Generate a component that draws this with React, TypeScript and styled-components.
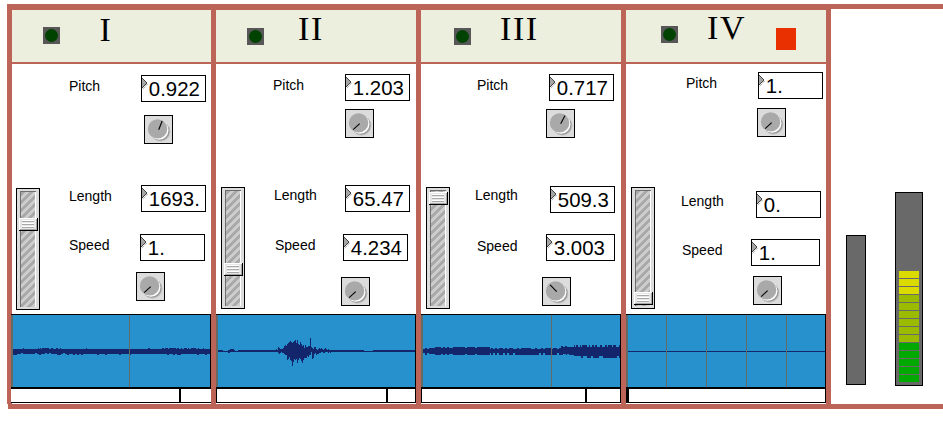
import React from "react";
import styled, { createGlobalStyle } from "styled-components";

const RUST = "#bd6459";

const GlobalStyle = createGlobalStyle`
  html, body { margin: 0; padding: 0; background: #fff; overflow: hidden; }
  * { box-sizing: border-box; }
`;

const Page = styled.main`
  width: 943px;
  height: 422px;
  padding-top: 4px;
  background: #fff;
  font-family: "Liberation Sans", Arial, sans-serif;
  color: #000;
`;

const Frame = styled.div`
  display: flex;
  height: 400px;
  margin-left: 7px;
  border-left: 5px solid ${RUST};
`;

const BottomRail = styled.div`
  height: 5px;
  margin-left: 8px;
  background: ${RUST};
`;

const Track = styled.section<{ $width: number }>`
  display: flex;
  flex-direction: column;
  flex: none;
  width: ${(p) => p.$width + 5}px;
  height: 400px;
  border-top: 6px solid ${RUST};
  border-right: 5px solid ${RUST};
`;

const Header = styled.header`
  display: flex;
  flex: none;
  align-items: flex-start;
  height: 54px;
  background: #eceede;
  border-bottom: 2px solid ${RUST};
`;

const Led = styled.span<{ $left: number; $top: number }>`
  display: flex;
  flex: none;
  align-items: center;
  justify-content: center;
  width: 17px;
  height: 17px;
  margin: ${(p) => p.$top}px 0 0 ${(p) => p.$left}px;
  background: #575757;

  &::before {
    content: "";
    width: 13px;
    height: 13px;
    border-radius: 50%;
    background: #004200;
  }
`;

const Numeral = styled.h2<{ $left: number; $top: number }>`
  flex: none;
  width: 58px;
  margin: ${(p) => p.$top}px 0 0 ${(p) => p.$left}px;
  font: 400 34px/34px "Liberation Serif", "Times New Roman", serif;
  letter-spacing: 1.6px;
  white-space: nowrap;
`;

const RecordMark = styled.span`
  flex: none;
  width: 20px;
  height: 22px;
  margin: 18px 0 0 11px;
  background: #e93000;
`;

const Body = styled.div`
  display: flex;
  flex: none;
  height: 250px;
`;

const SliderColumn = styled.div`
  flex: none;
  width: 36px;
`;

const LabelColumn = styled.div`
  flex: none;
  width: 84px;
`;

const ControlColumn = styled.div`
  flex: none;
  width: 79px;
`;

const SliderBox = styled.div<{ $left: number; $top: number }>`
  width: 24px;
  height: 122px;
  margin: ${(p) => p.$top}px 0 0 ${(p) => p.$left}px;
  padding: 2px 3px;
  border: 1px solid #000;
  background: #dcdcdc;
`;

const Channel = styled.div`
  height: 116px;
  border: solid #6e6e6e;
  border-width: 1px 0 0 1px;
  box-shadow: inset -1px 0 0 #fff;
  background: repeating-linear-gradient(135deg, #a9a9a9 0 2.83px, #cdcdcd 2.83px 5.66px);
`;

const Thumb = styled.div<{ $top: number }>`
  position: relative;
  top: ${(p) => p.$top}px;
  left: -2px;
  width: 19px;
  height: 13px;
  padding: 2px 3px;
  border: solid #000;
  border-width: 0 1px 1px 0;
  background: repeating-linear-gradient(#fff 0 1px, #a8a8a8 1px 2px, #e6e6e6 2px 3px) content-box, #e6e6e6;
  box-shadow: inset 1px 1px 0 #fff, inset -1px -1px 0 #a6a6a6;
`;

const Label = styled.div<{ $left: number; $top: number }>`
  height: 16px;
  margin: ${(p) => p.$top}px 0 0 ${(p) => p.$left}px;
  font-size: 14px;
  line-height: 16px;
`;

const NumberBox = styled.div<{ $left: number; $top: number; $width: number }>`
  display: flex;
  width: ${(p) => p.$width}px;
  height: 27px;
  margin: ${(p) => p.$top}px 0 0 ${(p) => p.$left}px;
  border: 1px solid #000;
  background: #fff;
  font-size: 20.4px;
  line-height: 25px;
  white-space: nowrap;
`;

const Arrow = styled.svg`
  flex: none;
  width: 6px;
  height: 12px;
  margin-top: 2px;
`;

const Digits = styled.span`
  padding: 1px 0 0 0.8px;
`;

const KnobBox = styled.div<{ $left: number; $top: number }>`
  width: 29px;
  height: 29px;
  margin: ${(p) => p.$top}px 0 0 ${(p) => p.$left}px;
  border: 1px solid #000;
  background: #dcdcdc;
`;

const Drawing = styled.svg`
  display: block;
`;

const WaveBox = styled.div<{ $bleed: number }>`
  flex: none;
  height: 74px;
  margin-left: ${(p) => -p.$bleed}px;
  border: solid #000;
  border-width: 1px 1px 1px 0;
  background: #2791ce;
`;

const ScrubBar = styled.div<{ $bleed: number; $start: number }>`
  display: flex;
  flex: none;
  height: 15px;
  margin-left: ${(p) => -p.$bleed}px;
  border: solid #000;
  border-width: 1px ${(p) => (p.$bleed ? 0 : 1)}px 1px ${(p) => p.$start}px;
  background: #fff;
`;

const ScrubMark = styled.i<{ $left: number }>`
  width: 2px;
  margin-left: ${(p) => p.$left}px;
  background: #000;
`;

const Meters = styled.aside`
  display: flex;
  flex: 1;
  align-items: flex-start;
  border-top: 5px solid ${RUST};
`;

const Meter = styled.div<{ $left: number; $top: number; $width: number; $height: number }>`
  display: flex;
  flex: none;
  flex-direction: column;
  justify-content: flex-end;
  gap: 1px;
  width: ${(p) => p.$width}px;
  height: ${(p) => p.$height}px;
  margin: ${(p) => p.$top}px 0 0 ${(p) => p.$left}px;
  padding: 3px;
  border: 1px solid #000;
  background: #696969;
`;

const Segment = styled.i<{ $color: string }>`
  flex: none;
  height: 7px;
  background: ${(p) => p.$color};
`;

/* Each column of a waveform is [pixels above the centre line, pixels below it]. */
type Column = [number, number];

const noise = (i: number, seed: number) => {
  const v = Math.sin(i * 12.9898 + seed * 78.233) * 43758.5453;
  return v - Math.floor(v);
};

const steadyWave: Column[] = Array.from({ length: 198 }, (_, i) => {
  const busy = (i > 24 && i < 48) || (i > 148 && i < 186);
  const up = noise(i, 1) < (busy ? 0.6 : 0.03) ? 3 : 2;
  const deep = noise(i >> 1, 2);
  return [up, deep < 0.25 ? 4 : deep < 0.85 || i > 60 ? 3 : 2];
});

const burst: Column[] = [
  [1, 1], [2, 1], [1, 1], [4, 2], [3, 3], [2, 2], [2, 1], [2, 2], [3, 2], [5, 3],
  [6, 4], [5, 4], [7, 9], [8, 8], [9, 6], [10, 9], [9, 10], [8, 15], [9, 11], [10, 8],
  [11, 9], [8, 8], [11, 12], [7, 9], [6, 7], [9, 8], [7, 10], [5, 12], [6, 9], [3, 7],
  [6, 7], [4, 7], [4, 5], [5, 6], [5, 4], [13, 4], [4, 1], [3, 8], [2, 7], [4, 3],
  [4, 2], [2, 4], [1, 3], [2, 3], [3, 2], [2, 2], [3, 1], [2, 1], [1, 2], [2, 2],
  [3, 1], [2, 1], [1, 1], [2, 2], [1, 1], [1, 2],
];

const burstWave: Column[] = Array.from({ length: 197 }, (_, i) => {
  if (i >= 57 && i < 57 + burst.length) return burst[i - 57];
  if (i > 9 && i < 16) return i < 12 ? [1, 2] : [2, 1];
  const thin = (i > 4 && i < 10) || (i > 16 && i < 20) || (i > 145 && i < 155);
  return thin ? [0, 1] : [1, 1];
});

const growingWave: Column[] = Array.from({ length: 197 }, (_, i) => {
  const n = noise(i, 5);
  const m = noise(i >> 1, 8);
  if (i >= 151) return [n > 0.4 ? 6 : 4, m > 0.4 ? 7 : 5];
  if (i >= 138) return [m > 0.4 ? 5 : 4, n > 0.5 ? 4 : 3];
  if (i < 6 || i > 66) return [m > 0.5 ? 3 : 2, m > 0.35 ? 4 : 2];
  return [m > 0.3 ? 4 : 3, m > 0.3 ? 4 : 3];
});

const silentWave: Column[] = Array.from({ length: 197 }, () => [0, 1]);

function Wave({ columns, marks }: { columns: Column[]; marks: number[] }) {
  const d = columns.map(([up, down], i) => `M${i + 2} ${36 - up}h1v${up + down}h-1z`).join("");
  return (
    <Drawing width="199" height="72" shapeRendering="crispEdges">
      <path d={d} fill="#14266b" />
      <rect width="2" height="72" fill="#666a64" />
      {marks.map((x) => (
        <rect key={x} x={x} width="1" height="72" fill="#666a64" />
      ))}
    </Drawing>
  );
}

function Knob({ left, top, angle }: { left: number; top: number; angle: number }) {
  const a = (angle * Math.PI) / 180;
  return (
    <KnobBox $left={left} $top={top}>
      <Drawing width="27" height="27" viewBox="0 0 27 27">
        <circle cx="15.5" cy="15.8" r="10" fill="#c6c6c6" />
        <circle cx="15" cy="15.2" r="9.6" fill="#999" />
        <circle cx="13.9" cy="14.1" r="9.6" fill="#fff" />
        <circle cx="12.6" cy="12.9" r="9.7" fill="#a9a9a9" />
        <line
          x1={13.7}
          y1={13.7}
          x2={13.5 + Math.sin(a) * 9}
          y2={13.2 - Math.cos(a) * 9}
          stroke="#000"
          strokeWidth="1.1"
        />
      </Drawing>
    </KnobBox>
  );
}

function NumberField({ left, top, width = 65, value }: { left: number; top: number; width?: number; value: string }) {
  return (
    <NumberBox $left={left} $top={top} $width={width}>
      <Arrow viewBox="0 0 6 12">
        <path d="M0 0L5 5L0 10z" fill="#a5a5a5" />
        <path d="M0 0L5 5L0 10" fill="none" stroke="#333" strokeWidth=".9" />
        <path d="M5.5 6L.5 11.5" stroke="#555" strokeWidth=".8" strokeDasharray="1 1" />
      </Arrow>
      <Digits>{value}</Digits>
    </NumberBox>
  );
}

type Place = [left: number, top: number];

interface TrackData {
  name: string;
  width: number;
  bleed: number;
  led: Place;
  numeral: Place;
  record?: boolean;
  slider: Place;
  thumb: number;
  labels: Place[];
  pitch: Place;
  pitchValue: string;
  pitchKnob: Place;
  pitchAngle: number;
  length: Place;
  lengthValue: string;
  speed: Place;
  speedWidth: number;
  speedValue: string;
  speedKnob: Place;
  speedAngle: number;
  wave: Column[];
  marks: number[];
  scrub: number;
  scrubStart: number;
}

const tracks: TrackData[] = [
  {
    name: "I", width: 199, bleed: 1, led: [31, 17], numeral: [39.5, 3],
    slider: [4, 124], thumb: 26, labels: [[21, 14], [21, 94], [21, 33]],
    pitch: [9, 11], pitchValue: "0.922", pitchKnob: [12, 13], pitchAngle: 24,
    length: [9, 41], lengthValue: "1693.",
    speed: [8, 22], speedWidth: 65, speedValue: "1.", speedKnob: [4, 11], speedAngle: 225,
    wave: steadyWave, marks: [118], scrub: 168, scrubStart: 0,
  },
  {
    name: "II", width: 200, bleed: 0, led: [31, 18], numeral: [34, 2],
    slider: [5, 123], thumb: 72, labels: [[21, 13], [22, 94], [23, 34]],
    pitch: [9, 10], pitchValue: "1.203", pitchKnob: [9, 8], pitchAngle: 225,
    length: [9, 47], lengthValue: "65.47",
    speed: [7, 22], speedWidth: 65, speedValue: "4.234", speedKnob: [5, 16], speedAngle: 225,
    wave: burstWave, marks: [], scrub: 169, scrubStart: 1,
  },
  {
    name: "III", width: 200, bleed: 0, led: [33, 18], numeral: [29, 2],
    slider: [5, 123], thumb: 1, labels: [[20, 13], [18, 94], [20, 35]],
    pitch: [8, 10], pitchValue: "0.717", pitchKnob: [5, 8], pitchAngle: 30,
    length: [9, 48], lengthValue: "509.3",
    speed: [5, 21], speedWidth: 69, speedValue: "3.003", speedKnob: [1, 16], speedAngle: -45,
    wave: growingWave, marks: [130], scrub: 163, scrubStart: 1,
  },
  {
    name: "IV", width: 200, bleed: 0, led: [35, 16], numeral: [29, 1], record: true,
    slider: [5, 123], thumb: 101, labels: [[24, 11], [19, 102], [20, 33]],
    pitch: [12, 8], pitchValue: "1.", pitchKnob: [11, 9], pitchAngle: 225,
    length: [10, 54], lengthValue: "0.",
    speed: [5, 21], speedWidth: 69, speedValue: "1.", speedKnob: [7, 10], speedAngle: 225,
    wave: silentWave, marks: [40, 80, 120, 160], scrub: 0, scrubStart: 1,
  },
];

const labelNames = ["Pitch", "Length", "Speed"];

const levels = [
  ...Array(3).fill("#dbdb00"),
  ...Array(6).fill("#9bbb00"),
  ...Array(5).fill("#00a900"),
];

function TrackPanel({ t }: { t: TrackData }) {
  return (
    <Track $width={t.width}>
      <Header>
        <Led $left={t.led[0]} $top={t.led[1]} />
        <Numeral $left={t.numeral[0]} $top={t.numeral[1]}>{t.name}</Numeral>
        {t.record && <RecordMark />}
      </Header>
      <Body>
        <SliderColumn>
          <SliderBox $left={t.slider[0]} $top={t.slider[1]}>
            <Channel>
              <Thumb $top={t.thumb} />
            </Channel>
          </SliderBox>
        </SliderColumn>
        <LabelColumn>
          {t.labels.map(([left, top], i) => (
            <Label key={i} $left={left} $top={top}>{labelNames[i]}</Label>
          ))}
        </LabelColumn>
        <ControlColumn>
          <NumberField left={t.pitch[0]} top={t.pitch[1]} value={t.pitchValue} />
          <Knob left={t.pitchKnob[0]} top={t.pitchKnob[1]} angle={t.pitchAngle} />
          <NumberField left={t.length[0]} top={t.length[1]} value={t.lengthValue} />
          <NumberField left={t.speed[0]} top={t.speed[1]} width={t.speedWidth} value={t.speedValue} />
          <Knob left={t.speedKnob[0]} top={t.speedKnob[1]} angle={t.speedAngle} />
        </ControlColumn>
      </Body>
      <WaveBox $bleed={t.bleed}>
        <Wave columns={t.wave} marks={t.marks} />
      </WaveBox>
      <ScrubBar $bleed={t.bleed} $start={t.scrubStart}>
        <ScrubMark $left={t.scrub} />
      </ScrubBar>
    </Track>
  );
}

export default function App() {
  return (
    <>
      <GlobalStyle />
      <Page>
        <Frame>
          {tracks.map((t) => (
            <TrackPanel key={t.name} t={t} />
          ))}
          <Meters>
            <Meter $left={15} $top={226} $width={20} $height={150} />
            <Meter $left={29} $top={183} $width={28} $height={194}>
              {levels.map((color, i) => (
                <Segment key={i} $color={color} />
              ))}
            </Meter>
          </Meters>
        </Frame>
        <BottomRail />
      </Page>
    </>
  );
}
